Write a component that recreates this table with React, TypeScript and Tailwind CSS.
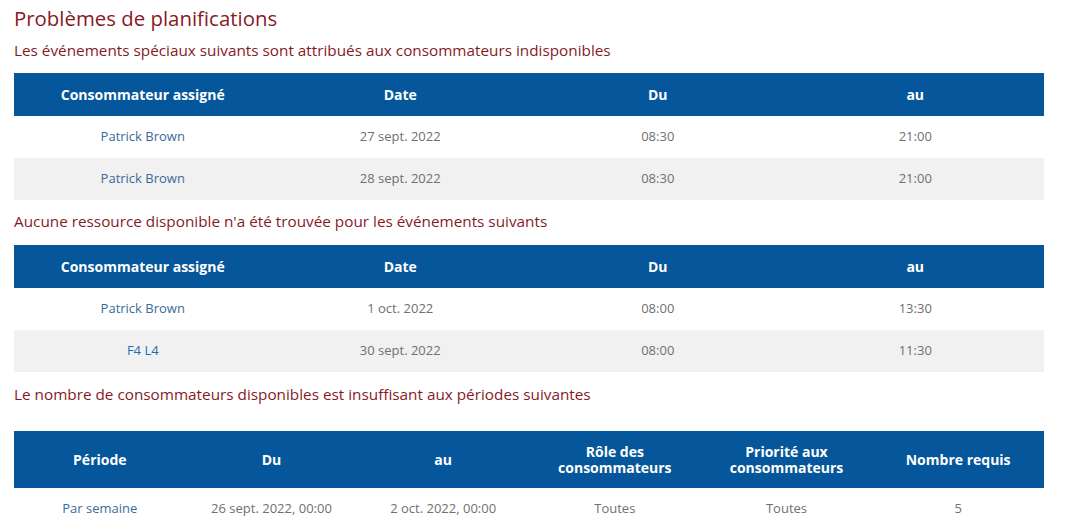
import React from 'react';

type Cell = { text: string; tone?: 'name' | 'link' | 'muted' };

const font = { fontFamily: '"Open Sans", "Liberation Sans", sans-serif' };

function toneClass(tone?: Cell['tone']) {
    if (tone === 'name') return 'text-[#3b6b98]';
    if (tone === 'link') return 'text-[#1f6db3]';
    return 'text-[#707070]';
}

function IssueTable({ head, rows, cols, headHeight }: { head: string[]; rows: Cell[][]; cols: string; headHeight: string }) {
    return (
        <div className="w-[1030px]">
            <div className={`grid ${cols} ${headHeight} bg-[#05569a] text-white text-[14px] font-bold leading-[16px]`}>
                {head.map((h) => (
                    <div key={h} className="flex items-center justify-center text-center px-2">
                        {h}
                    </div>
                ))}
            </div>
            {rows.map((row, i) => (
                <div key={i} className={`grid ${cols} h-[42px] text-[13px] ${i % 2 === 1 ? 'bg-[#f1f1f1]' : 'bg-white'}`}>
                    {row.map((c, j) => (
                        <div key={j} className={`flex items-center justify-center ${toneClass(c.tone)}`}>
                            {c.text}
                        </div>
                    ))}
                </div>
            ))}
        </div>
    );
}

export default function App() {
    const headA = ['Consommateur assigné', 'Date', 'Du', 'au'];

    return (
        <main className="bg-white w-[1065px] h-[525px] overflow-hidden pl-[14px]" style={font}>
            <h1 className="text-[20.4px] leading-[24px] pt-[6px] text-[#861a1f]">Problèmes de planifications</h1>

            <p className="mt-[11px] text-[15.3px] leading-[18px] text-[#861a1f]">
                Les événements spéciaux suivants sont attribués aux consommateurs indisponibles
            </p>
            <div className="mt-[14px]">
                <IssueTable
                    head={headA}
                    cols="grid-cols-4"
                    headHeight="h-[43px]"
                    rows={[
                        [{ text: 'Patrick Brown', tone: 'name' }, { text: '27 sept. 2022' }, { text: '08:30' }, { text: '21:00' }],
                        [{ text: 'Patrick Brown', tone: 'name' }, { text: '28 sept. 2022' }, { text: '08:30' }, { text: '21:00' }],
                    ]}
                />
            </div>

            <p className="mt-[12px] text-[15.3px] leading-[18px] text-[#861a1f]">
                Aucune ressource disponible n'a été trouvée pour les événements suivants
            </p>
            <div className="mt-[15px]">
                <IssueTable
                    head={headA}
                    cols="grid-cols-4"
                    headHeight="h-[43px]"
                    rows={[
                        [{ text: 'Patrick Brown', tone: 'name' }, { text: '1 oct. 2022' }, { text: '08:00' }, { text: '13:30' }],
                        [{ text: 'F4 L4', tone: 'link' }, { text: '30 sept. 2022' }, { text: '08:00' }, { text: '11:30' }],
                    ]}
                />
            </div>

            <p className="mt-[13px] text-[15.3px] leading-[18px] text-[#861a1f]">
                Le nombre de consommateurs disponibles est insuffisant aux périodes suivantes
            </p>
            <div className="mt-[28px]">
                <IssueTable
                    head={['Période', 'Du', 'au', 'Rôle des consommateurs', 'Priorité aux consommateurs', 'Nombre requis']}
                    cols="grid-cols-6"
                    headHeight="h-[57px]"
                    rows={[
                        [
                            { text: 'Par semaine', tone: 'name' },
                            { text: '26 sept. 2022, 00:00' },
                            { text: '2 oct. 2022, 00:00' },
                            { text: 'Toutes' },
                            { text: 'Toutes' },
                            { text: '5' },
                        ],
                    ]}
                />
            </div>
        </main>
    );
}
